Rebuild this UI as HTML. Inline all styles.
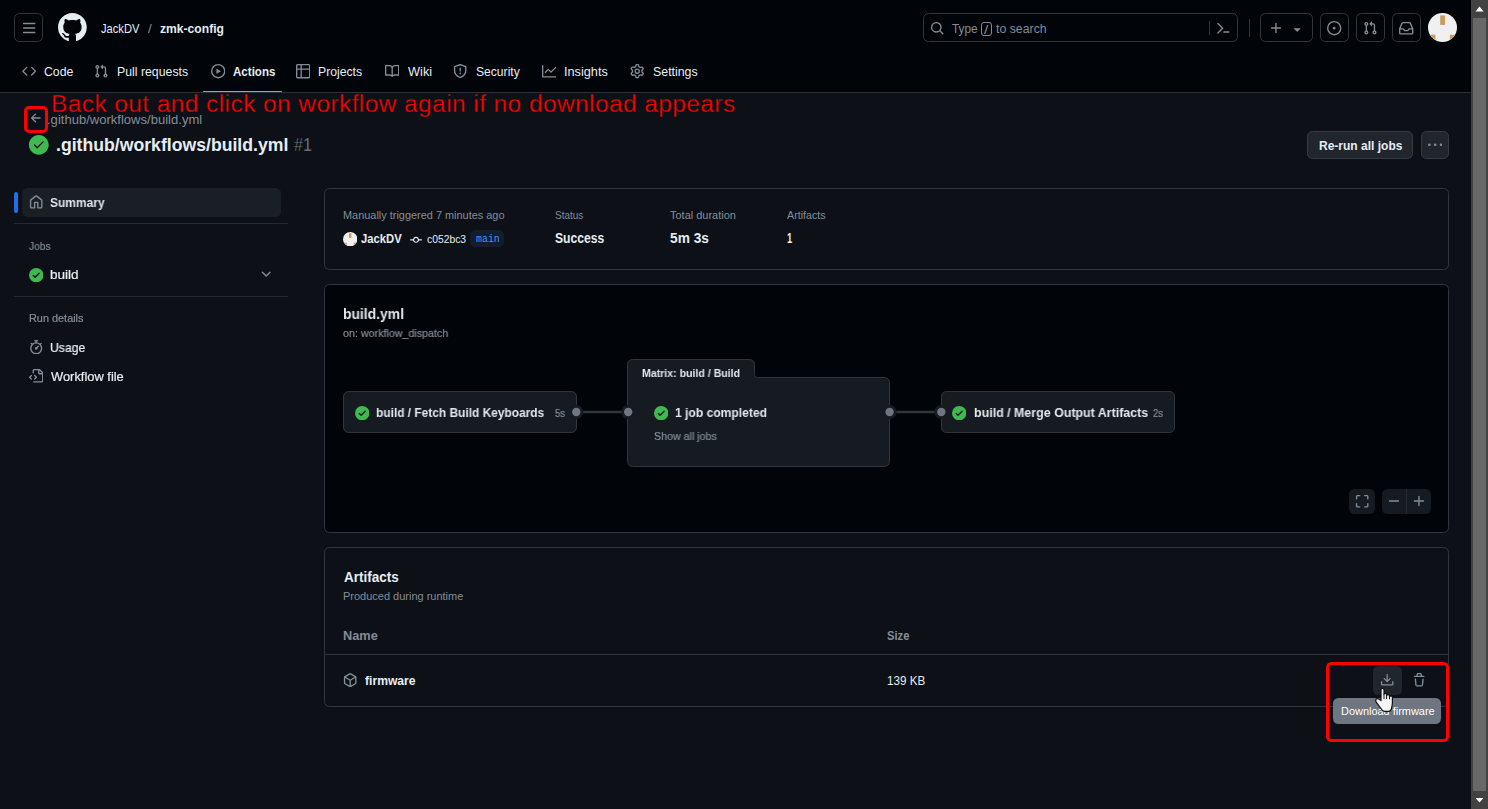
<!DOCTYPE html>
<html lang="en">
<head>
<meta charset="utf-8">
<title>.github/workflows/build.yml · JackDV/zmk-config</title>
<style>
html,body{margin:0;padding:0}
body{width:1488px;height:809px;overflow:hidden;position:relative;background:#0d1117;color:#e6edf3;font-family:"Liberation Sans",sans-serif;font-size:12.6px}
.i,.t,.b,.abs{position:absolute;display:block}
.t{white-space:nowrap;transform-origin:0 0;margin:0;padding:0;font-weight:400;text-decoration:none;color:#e6edf3}
.b{box-sizing:border-box}
a{color:inherit;text-decoration:none}
ul,li,h1,h2,h3,p{margin:0;padding:0;list-style:none;font-size:inherit;font-weight:inherit}
.hdr{left:0;top:0;width:1471px;height:93px;background:#010409;border-bottom:1px solid #2b3139}
.btn-o{border:1px solid #30363d;border-radius:5.4px}
.btn{background:#21262d;border:1px solid #363b42;border-radius:5.4px}
.card{border:1px solid #30363d;border-radius:5.4px}
.job{background:#161b22;border:1px solid #30363d;border-radius:5.4px}
.hr{height:1px;background:#252a32}
.sb-track{left:1471px;top:0;width:17px;height:809px;background:#424242}
.sb-thumb{left:1473px;top:18px;width:13px;height:773px;background:#686868}

</style>
</head>
<body>
<header class="abs hdr b"><button class="b btn-o" style="left:14px;top:13px;width:29px;height:29px;background:none;padding:0"></button><svg class="i" style="left:22.3px;top:21.3px;width:14.4px;height:14.4px" viewBox="0 0 16 16" fill="#848d97"><path d="M1 2.75A.75.75 0 0 1 1.75 2h12.5a.75.75 0 0 1 0 1.5H1.75A.75.75 0 0 1 1 2.75Zm0 5A.75.75 0 0 1 1.75 7h12.5a.75.75 0 0 1 0 1.5H1.75A.75.75 0 0 1 1 7.75ZM1.75 12h12.5a.75.75 0 0 1 0 1.5H1.75a.75.75 0 0 1 0-1.5Z"/></svg><svg class="i" style="left:58px;top:13px;width:28.8px;height:28.8px" viewBox="0 0 16 16" fill="#e6edf3"><path d="M8 0c4.42 0 8 3.58 8 8a8.013 8.013 0 0 1-5.45 7.59c-.4.08-.55-.17-.55-.38 0-.27.01-1.13.01-2.2 0-.75-.25-1.23-.54-1.48 1.78-.2 3.65-.88 3.65-3.95 0-.88-.31-1.59-.82-2.15.08-.2.36-1.02-.08-2.12 0 0-.67-.22-2.2.82-.64-.18-1.32-.27-2-.27-.68 0-1.36.09-2 .27-1.53-1.03-2.2-.82-2.2-.82-.44 1.1-.16 1.92-.08 2.12-.51.56-.82 1.28-.82 2.15 0 3.06 1.86 3.75 3.64 3.95-.23.2-.44.55-.51 1.07-.46.21-1.61.55-2.33-.66-.15-.24-.6-.83-1.23-.82-.67.01-.27.38.01.53.34.19.73.9.82 1.13.16.45.68 1.31 2.69.94 0 .67.01 1.3.01 1.49 0 .21-.15.45-.55.38A7.995 7.995 0 0 1 0 8c0-4.42 3.58-8 8-8Z"/></svg><nav aria-label="Breadcrumb"><a class="t" style="left:101.43px;top:20px;font-size:12.6px;line-height:19px;transform:scaleX(0.8849);">JackDV</a><span class="t" style="left:148.10px;top:20px;font-size:12.6px;line-height:19px;color:#848d97;transform:scaleX(1.0563);">/</span><a class="t" style="left:159.61px;top:20px;font-size:12.6px;line-height:19px;font-weight:700;transform:scaleX(0.9623);">zmk-config</a></nav><div role="search"><div class="b btn-o" style="left:923px;top:13px;width:315px;height:29px;"></div><svg class="i" style="left:930px;top:21.3px;width:14.4px;height:14.4px" viewBox="0 0 16 16" fill="#848d97"><path d="M10.68 11.74a6 6 0 0 1-7.922-8.982 6 6 0 0 1 8.982 7.922l3.04 3.04a.749.749 0 0 1-.326 1.275.749.749 0 0 1-.734-.215ZM11.5 7a4.499 4.499 0 1 0-8.997 0A4.499 4.499 0 0 0 11.5 7Z"/></svg><span class="t" style="left:952.34px;top:20px;font-size:12.6px;line-height:19px;color:#848d97;transform:scaleX(0.9326);">Type</span><kbd class="b" style="left:981px;top:22px;width:11px;height:14px;border:1px solid #848d97;border-radius:3px"></kbd><span class="t" style="left:984.20px;top:21px;font-size:12px;line-height:18px;color:#848d97;transform:scaleX(1.2890);">/</span><span class="t" style="left:996.17px;top:20px;font-size:12.6px;line-height:19px;color:#848d97;transform:scaleX(0.9778);">to search</span><div class="abs" style="left:1209px;top:21px;width:1px;height:14px;background:#30363d"></div><svg class="i" style="left:1215.8px;top:21.3px;width:14.4px;height:14.4px" viewBox="0 0 16 16" fill="#848d97"><path d="m6.354 8.04-4.773 4.773a.75.75 0 1 0 1.061 1.06L7.945 8.57a.75.75 0 0 0 0-1.06L2.642 2.206a.75.75 0 0 0-1.06 1.061L6.353 8.04ZM8.75 11.5a.75.75 0 0 0 0 1.5h5.5a.75.75 0 0 0 0-1.5h-5.5Z"/></svg></div><div class="abs" style="left:1249px;top:19px;width:1px;height:18px;background:#30363d"></div><button class="b btn-o" style="left:1260px;top:13px;width:53px;height:29px;background:none;padding:0"></button><svg class="i" style="left:1269px;top:21.3px;width:14.4px;height:14.4px" viewBox="0 0 16 16" fill="#848d97"><path d="M7.75 2a.75.75 0 0 1 .75.75V7h4.25a.75.75 0 0 1 0 1.5H8.5v4.25a.75.75 0 0 1-1.5 0V8.5H2.75a.75.75 0 0 1 0-1.5H7V2.75A.75.75 0 0 1 7.75 2Z"/></svg><svg class="i" style="left:1290.1px;top:21.6px;width:14.4px;height:14.4px" viewBox="0 0 16 16" fill="#848d97"><path d="m4.427 7.427 3.396 3.396a.25.25 0 0 0 .354 0l3.396-3.396A.25.25 0 0 0 11.396 7H4.604a.25.25 0 0 0-.177.427Z"/></svg><button class="b btn-o" style="left:1320px;top:13px;width:29px;height:29px;background:none;padding:0"></button><svg class="i" style="left:1327.3px;top:21.3px;width:14.4px;height:14.4px" viewBox="0 0 16 16" fill="#848d97"><path d="M8 9.5a1.5 1.5 0 1 0 0-3 1.5 1.5 0 0 0 0 3ZM8 0a8 8 0 1 1 0 16A8 8 0 0 1 8 0ZM1.5 8a6.5 6.5 0 1 0 13 0 6.5 6.5 0 0 0-13 0Z"/></svg><button class="b btn-o" style="left:1356px;top:13px;width:29px;height:29px;background:none;padding:0"></button><svg class="i" style="left:1363.3px;top:21.3px;width:14.4px;height:14.4px" viewBox="0 0 16 16" fill="#848d97"><path d="M1.5 3.25a2.25 2.25 0 1 1 3 2.122v5.256a2.251 2.251 0 1 1-1.5 0V5.372A2.25 2.25 0 0 1 1.5 3.25Zm5.677-.177L9.573.677A.25.25 0 0 1 10 .854V2.5h1A2.5 2.5 0 0 1 13.5 5v5.628a2.251 2.251 0 1 1-1.5 0V5a1 1 0 0 0-1-1h-1v1.646a.25.25 0 0 1-.427.177L7.177 3.427a.25.25 0 0 1 0-.354ZM3.75 2.5a.75.75 0 1 0 0 1.5.75.75 0 0 0 0-1.5Zm0 9.5a.75.75 0 1 0 0 1.5.75.75 0 0 0 0-1.5Zm8.25.75a.75.75 0 1 0 1.5 0 .75.75 0 0 0-1.5 0Z"/></svg><button class="b btn-o" style="left:1392px;top:13px;width:29px;height:29px;background:none;padding:0"></button><svg class="i" style="left:1399.3px;top:21.3px;width:14.4px;height:14.4px" viewBox="0 0 16 16" fill="#848d97"><path d="M2.8 2.06A1.75 1.75 0 0 1 4.41 1h7.18c.7 0 1.333.417 1.61 1.06l2.74 6.395c.04.093.06.194.06.295v4.5A1.75 1.75 0 0 1 14.25 15H1.75A1.75 1.75 0 0 1 0 13.25v-4.5c0-.101.02-.202.06-.295Zm1.61.44a.25.25 0 0 0-.23.152L1.887 8H4.75a.75.75 0 0 1 .6.3L6.625 10h2.75l1.275-1.7a.75.75 0 0 1 .6-.3h2.863L11.82 2.652a.25.25 0 0 0-.23-.152Zm10.09 7h-2.875l-1.275 1.7a.75.75 0 0 1-.6.3h-3.5a.75.75 0 0 1-.6-.3L4.375 9.5H1.5v3.75c0 .138.112.25.25.25h12.5a.25.25 0 0 0 .25-.25Z"/></svg><svg class="i" style="left:1428px;top:13px;width:29px;height:29px" viewBox="0 0 29 29"><defs><clipPath id="av"><circle cx="14.5" cy="14.5" r="14.5"/></clipPath></defs><g clip-path="url(#av)"><rect width="29" height="29" fill="#f0f0f0"/><rect x="12.2" y="2.400" width="4.8" height="9.500" fill="#c89b5e"/><rect x="2.8" y="21.7" width="4.6" height="8" fill="#c89b5e"/><rect x="21.9" y="21.7" width="4.6" height="8" fill="#c89b5e"/></g></svg><nav aria-label="Repository"><ul><li><svg class="i" style="left:21.8px;top:64.3px;width:14.4px;height:14.4px" viewBox="0 0 16 16" fill="#848d97"><path d="m11.28 3.22 4.25 4.25a.75.75 0 0 1 0 1.06l-4.25 4.25a.749.749 0 0 1-1.275-.326.749.749 0 0 1 .215-.734L13.94 8l-3.72-3.72a.749.749 0 0 1 .326-1.275.749.749 0 0 1 .734.215Zm-6.56 0a.751.751 0 0 1 1.042.018.751.751 0 0 1 .018 1.042L2.06 8l3.72 3.72a.749.749 0 0 1-.326 1.275.749.749 0 0 1-.734-.215L.47 8.53a.75.75 0 0 1 0-1.06Z"/></svg><a class="t" style="left:43.74px;top:63px;font-size:12.6px;line-height:19px;transform:scaleX(0.9748);">Code</a></li><li><svg class="i" style="left:93.65px;top:64.3px;width:14.4px;height:14.4px" viewBox="0 0 16 16" fill="#848d97"><path d="M1.5 3.25a2.25 2.25 0 1 1 3 2.122v5.256a2.251 2.251 0 1 1-1.5 0V5.372A2.25 2.25 0 0 1 1.5 3.25Zm5.677-.177L9.573.677A.25.25 0 0 1 10 .854V2.5h1A2.5 2.5 0 0 1 13.5 5v5.628a2.251 2.251 0 1 1-1.5 0V5a1 1 0 0 0-1-1h-1v1.646a.25.25 0 0 1-.427.177L7.177 3.427a.25.25 0 0 1 0-.354ZM3.75 2.5a.75.75 0 1 0 0 1.5.75.75 0 0 0 0-1.5Zm0 9.5a.75.75 0 1 0 0 1.5.75.75 0 0 0 0-1.5Zm8.25.75a.75.75 0 1 0 1.5 0 .75.75 0 0 0-1.5 0Z"/></svg><a class="t" style="left:117.09px;top:63px;font-size:12.6px;line-height:19px;transform:scaleX(0.9768);">Pull requests</a></li><li><svg class="i" style="left:210.8px;top:64.3px;width:14.4px;height:14.4px" viewBox="0 0 16 16" fill="#848d97"><path d="M8 0a8 8 0 1 1 0 16A8 8 0 0 1 8 0ZM1.5 8a6.5 6.5 0 1 0 13 0 6.5 6.5 0 0 0-13 0Zm4.879-2.773 4.264 2.559a.25.25 0 0 1 0 .428l-4.264 2.559A.25.25 0 0 1 6 10.559V5.442a.25.25 0 0 1 .379-.215Z"/></svg><a class="t" style="left:232.82px;top:63px;font-size:12.6px;line-height:19px;font-weight:700;transform:scaleX(0.9185);">Actions</a></li><li><svg class="i" style="left:295.8px;top:64.3px;width:14.4px;height:14.4px" viewBox="0 0 16 16" fill="#848d97"><path d="M0 1.75C0 .784.784 0 1.75 0h12.5C15.216 0 16 .784 16 1.75v12.5A1.75 1.75 0 0 1 14.25 16H1.75A1.75 1.75 0 0 1 0 14.25ZM6.5 6.5v8h7.75a.25.25 0 0 0 .25-.25V6.5Zm8-1.5V1.75a.25.25 0 0 0-.25-.25H6.5V5Zm-13 1.5v7.75c0 .138.112.25.25.25H5v-8ZM5 5V1.5H1.75a.25.25 0 0 0-.25.25V5Z"/></svg><a class="t" style="left:318.10px;top:63px;font-size:12.6px;line-height:19px;transform:scaleX(0.9699);">Projects</a></li><li><svg class="i" style="left:384.8px;top:64.3px;width:14.4px;height:14.4px" viewBox="0 0 16 16" fill="#848d97"><path d="M0 1.75A.75.75 0 0 1 .75 1h4.253c1.227 0 2.317.59 3 1.501A3.743 3.743 0 0 1 11.006 1h4.245a.75.75 0 0 1 .75.75v10.5a.75.75 0 0 1-.75.75h-4.507a2.25 2.25 0 0 0-1.591.659l-.622.621a.75.75 0 0 1-1.06 0l-.622-.621A2.25 2.25 0 0 0 5.258 13H.75a.75.75 0 0 1-.75-.75Zm7.251 10.324.004-5.073-.002-2.253A2.25 2.25 0 0 0 5.003 2.5H1.5v9h3.757a3.75 3.75 0 0 1 1.994.574ZM8.755 4.75l-.004 7.322a3.752 3.752 0 0 1 1.992-.572H14.5v-9h-3.495a2.25 2.25 0 0 0-2.25 2.25Z"/></svg><a class="t" style="left:407.55px;top:63px;font-size:12.6px;line-height:19px;transform:scaleX(1.0134);">Wiki</a></li><li><svg class="i" style="left:452.6px;top:64.3px;width:14.4px;height:14.4px" viewBox="0 0 16 16" fill="#848d97"><path d="M7.467.133a1.748 1.748 0 0 1 1.066 0l5.25 1.68A1.75 1.75 0 0 1 15 3.48V7c0 1.566-.32 3.182-1.303 4.682-.983 1.498-2.585 2.813-5.032 3.855a1.697 1.697 0 0 1-1.33 0c-2.447-1.042-4.049-2.357-5.032-3.855C1.32 10.182 1 8.566 1 7V3.48a1.75 1.75 0 0 1 1.217-1.667Zm.61 1.429a.25.25 0 0 0-.153 0l-5.25 1.68a.25.25 0 0 0-.174.238V7c0 1.358.275 2.666 1.057 3.86.784 1.194 2.121 2.34 4.366 3.297a.196.196 0 0 0 .154 0c2.245-.956 3.582-2.104 4.366-3.298C13.225 9.666 13.5 8.36 13.5 7V3.48a.251.251 0 0 0-.174-.237l-5.25-1.68ZM8.75 4.75v3a.75.75 0 0 1-1.5 0v-3a.75.75 0 0 1 1.5 0ZM9 10.5a1 1 0 1 1-2 0 1 1 0 0 1 2 0Z"/></svg><a class="t" style="left:476.05px;top:63px;font-size:12.6px;line-height:19px;transform:scaleX(0.9617);">Security</a></li><li><svg class="i" style="left:542px;top:64.3px;width:14.4px;height:14.4px" viewBox="0 0 16 16" fill="#848d97"><path d="M1.5 1.75V13.5h13.75a.75.75 0 0 1 0 1.5H.75a.75.75 0 0 1-.75-.75V1.75a.75.75 0 0 1 1.5 0Zm14.28 2.53-5.25 5.25a.75.75 0 0 1-1.06 0L7 7.06 4.28 9.78a.751.751 0 0 1-1.042-.018.751.751 0 0 1-.018-1.042l3.25-3.25a.75.75 0 0 1 1.06 0L10 7.94l4.72-4.72a.751.751 0 0 1 1.042.018.751.751 0 0 1 .018 1.042Z"/></svg><a class="t" style="left:563.93px;top:63px;font-size:12.6px;line-height:19px;transform:scaleX(1.0094);">Insights</a></li><li><svg class="i" style="left:630px;top:64.3px;width:14.4px;height:14.4px" viewBox="0 0 16 16" fill="#848d97"><path d="M8 0a8.2 8.2 0 0 1 .701.031C9.444.095 9.99.645 10.16 1.29l.288 1.107c.018.066.079.158.212.224.231.114.454.243.668.386.123.082.233.09.299.071l1.103-.303c.644-.176 1.392.021 1.82.63.27.385.506.792.704 1.218.315.675.111 1.422-.364 1.891l-.814.806c-.049.048-.098.147-.088.294.016.257.016.515 0 .772-.01.147.038.246.088.294l.814.806c.475.469.679 1.216.364 1.891a7.977 7.977 0 0 1-.704 1.217c-.428.61-1.176.807-1.82.63l-1.102-.302c-.067-.019-.177-.011-.3.071a5.909 5.909 0 0 1-.668.386c-.133.066-.194.158-.211.224l-.29 1.106c-.168.646-.715 1.196-1.458 1.26a8.006 8.006 0 0 1-1.402 0c-.743-.064-1.289-.614-1.458-1.26l-.289-1.106c-.018-.066-.079-.158-.212-.224a5.738 5.738 0 0 1-.668-.386c-.123-.082-.233-.09-.299-.071l-1.103.303c-.644.176-1.392-.021-1.82-.63a8.12 8.12 0 0 1-.704-1.218c-.315-.675-.111-1.422.363-1.891l.815-.806c.05-.048.098-.147.088-.294a6.214 6.214 0 0 1 0-.772c.01-.147-.038-.246-.088-.294l-.815-.806C.635 6.045.431 5.298.746 4.623a7.92 7.92 0 0 1 .704-1.217c.428-.61 1.176-.807 1.82-.63l1.102.302c.067.019.177.011.3-.071.214-.143.437-.272.668-.386.133-.066.194-.158.211-.224l.29-1.106C6.009.645 6.556.095 7.299.03 7.53.01 7.764 0 8 0Zm-.571 1.525c-.036.003-.108.036-.137.146l-.289 1.105c-.147.561-.549.967-.998 1.189-.173.086-.34.183-.5.29-.417.278-.97.423-1.529.27l-1.103-.303c-.109-.03-.175.016-.195.045-.22.312-.412.644-.573.99-.014.031-.021.11.059.19l.815.806c.411.406.562.957.53 1.456a4.709 4.709 0 0 0 0 .582c.032.499-.119 1.05-.53 1.456l-.815.806c-.081.08-.073.159-.059.19.162.346.353.677.573.989.02.03.085.076.195.046l1.102-.303c.56-.153 1.113-.008 1.53.27.161.107.328.204.501.29.447.222.85.629.997 1.189l.289 1.105c.029.109.101.143.137.146a6.6 6.6 0 0 0 1.142 0c.036-.003.108-.036.137-.146l.289-1.105c.147-.561.549-.967.998-1.189.173-.086.34-.183.5-.29.417-.278.97-.423 1.529-.27l1.103.303c.109.029.175-.016.195-.045.22-.313.411-.644.573-.99.014-.031.021-.11-.059-.19l-.815-.806c-.411-.406-.562-.957-.53-1.456a4.709 4.709 0 0 0 0-.582c-.032-.499.119-1.05.53-1.456l.815-.806c.081-.08.073-.159.059-.19a6.464 6.464 0 0 0-.573-.989c-.02-.03-.085-.076-.195-.046l-1.102.303c-.56.153-1.113.008-1.53-.27a4.44 4.44 0 0 0-.501-.29c-.447-.222-.85-.629-.997-1.189l-.289-1.105c-.029-.11-.101-.143-.137-.146a6.6 6.6 0 0 0-1.142 0ZM11 8a3 3 0 1 1-6 0 3 3 0 0 1 6 0ZM9.5 8a1.5 1.5 0 1 0-3.001.001A1.5 1.5 0 0 0 9.5 8Z"/></svg><a class="t" style="left:652.54px;top:63px;font-size:12.6px;line-height:19px;transform:scaleX(0.9820);">Settings</a></li><div class="abs" style="left:203px;top:90.8px;width:79px;height:1.4px;background:#f78166;border-radius:1px"></div></ul></nav></header>
<section class="pagehead"><svg class="i" style="left:28.5px;top:110.8px;width:14.4px;height:14.4px" viewBox="0 0 16 16" fill="#848d97"><path d="M7.78 12.53a.75.75 0 0 1-1.06 0L2.47 8.28a.75.75 0 0 1 0-1.06l4.25-4.25a.751.751 0 0 1 1.042.018.751.751 0 0 1 .018 1.042L4.81 7h7.44a.75.75 0 0 1 0 1.5H4.81l2.97 2.97a.75.75 0 0 1 0 1.06Z"/></svg><a class="t" style="left:47.41px;top:111px;font-size:12.6px;line-height:19px;color:#848d97;transform:scaleX(1.0360);">.github/workflows/build.yml</a><svg class="i" style="left:27.85px;top:134.1px;width:21.6px;height:21.6px" viewBox="0 0 24 24" fill="#3fb950"><path d="M1 12C1 5.925 5.925 1 12 1s11 4.925 11 11-4.925 11-11 11S1 18.075 1 12Zm16.28-2.72a.751.751 0 0 0-.018-1.042.751.751 0 0 0-1.042-.018l-5.97 5.97-2.47-2.47a.751.751 0 0 0-1.042.018.751.751 0 0 0-.018 1.042l3 3a.75.75 0 0 0 1.06 0Z"/></svg><h1><span class="t" style="left:55.67px;top:132px;font-size:18px;line-height:27px;font-weight:700;transform:scaleX(0.9804);">.github/workflows/build.yml</span><span class="t" style="left:294.29px;top:132px;font-size:18px;line-height:27px;color:#848d97;transform:scaleX(0.9015);-webkit-text-stroke:0.350px #0d1117;">#1</span></h1><button class="b btn" style="left:1307px;top:131px;width:106px;height:28px;padding:0"></button><span class="t" style="left:1318.81px;top:137px;font-size:12.6px;line-height:19px;font-weight:700;transform:scaleX(0.9539);">Re-run all jobs</span><button class="b btn" style="left:1421px;top:131px;width:28px;height:28px;padding:0"></button><svg class="i" style="left:1427.8px;top:137.8px;width:14.4px;height:14.4px" viewBox="0 0 16 16" fill="#848d97"><path d="M8 9a1.5 1.5 0 1 0 0-3 1.5 1.5 0 0 0 0 3ZM1.5 9a1.5 1.5 0 1 0 0-3 1.5 1.5 0 0 0 0 3Zm13 0a1.5 1.5 0 1 0 0-3 1.5 1.5 0 0 0 0 3Z"/></svg></section>
<aside class="sidebar"><div class="abs" style="left:14px;top:192px;width:4px;height:21px;background:#1f6feb;border-radius:2px"></div><div class="abs" style="left:22px;top:188px;width:259px;height:29px;background:#1a1e25;border-radius:5.4px"></div><svg class="i" style="left:28.6px;top:195.3px;width:14.4px;height:14.4px" viewBox="0 0 16 16" fill="#848d97"><path d="M6.906.664a1.749 1.749 0 0 1 2.187 0l5.25 4.2c.415.332.657.835.657 1.367v7.019A1.75 1.75 0 0 1 13.25 15h-3.5a.75.75 0 0 1-.75-.75V9H7v5.25a.75.75 0 0 1-.75.75h-3.5A1.75 1.75 0 0 1 1 13.25V6.23c0-.531.242-1.034.657-1.366l5.25-4.2Zm1.25 1.171a.25.25 0 0 0-.312 0l-5.25 4.2a.25.25 0 0 0-.094.196v7.019c0 .138.112.25.25.25H5.5V8.25a.75.75 0 0 1 .75-.75h3.5a.75.75 0 0 1 .75.75v5.25h2.75a.25.25 0 0 0 .25-.25V6.23a.25.25 0 0 0-.094-.195Z"/></svg><a class="t" style="left:50.26px;top:194px;font-size:12.6px;line-height:19px;font-weight:700;color:#e2e8ee;transform:scaleX(0.9508);will-change:transform;">Summary</a><div class="abs hr" style="left:14px;top:223px;width:274px;height:1px;"></div><h3 class="t" style="left:29.45px;top:238px;font-size:10.8px;line-height:17px;color:#848d97;transform:scaleX(0.9412);will-change:transform;-webkit-text-stroke:0.2px #848d97;">Jobs</h3><svg class="i" style="left:29px;top:268px;width:14.4px;height:14.4px" viewBox="0 0 16 16" fill="#3fb950"><path d="M8 16A8 8 0 1 1 8 0a8 8 0 0 1 0 16Zm3.78-9.72a.751.751 0 0 0-.018-1.042.751.751 0 0 0-1.042-.018L6.75 9.19 5.28 7.72a.751.751 0 0 0-1.042.018.751.751 0 0 0-.018 1.042l2 2a.75.75 0 0 0 1.06 0Z"/></svg><a class="t" style="left:50.23px;top:266px;font-size:12.6px;line-height:19px;transform:scaleX(1.0775);will-change:transform;-webkit-text-stroke:0.2px #e6edf3;">build</a><svg class="i" style="left:259.2px;top:266.6px;width:14.4px;height:14.4px" viewBox="0 0 16 16" fill="#848d97"><path d="M12.78 5.22a.749.749 0 0 1 0 1.06l-4.25 4.25a.749.749 0 0 1-1.06 0L3.22 6.28a.749.749 0 1 1 1.06-1.06L8 8.939l3.72-3.719a.749.749 0 0 1 1.06 0Z"/></svg><div class="abs hr" style="left:14px;top:296px;width:274px;height:1px;"></div><h3 class="t" style="left:28.71px;top:310px;font-size:10.8px;line-height:17px;color:#848d97;transform:scaleX(1.0084);will-change:transform;-webkit-text-stroke:0.2px #848d97;">Run details</h3><svg class="i" style="left:29.2px;top:340px;width:14.4px;height:14.4px" viewBox="0 0 16 16" fill="#848d97"><path d="M5.75.75A.75.75 0 0 1 6.5 0h3a.75.75 0 0 1 0 1.5h-.75v1l-.001.041a6.724 6.724 0 0 1 3.464 1.435l.007-.006.75-.75a.749.749 0 0 1 1.275.326.749.749 0 0 1-.215.734l-.75.75-.006.007a6.75 6.75 0 1 1-10.548 0L2.72 5.03l-.75-.75a.751.751 0 0 1 .018-1.042.751.751 0 0 1 1.042-.018l.75.75.007.006A6.72 6.72 0 0 1 7.25 2.541V1.5H6.5a.75.75 0 0 1-.75-.75ZM8 14.5a5.25 5.25 0 1 0-.001-10.501A5.25 5.25 0 0 0 8 14.5Zm.389-6.7 1.33-1.33a.75.75 0 1 1 1.061 1.06L9.45 8.861A1.503 1.503 0 0 1 8 10.75a1.499 1.499 0 1 1 .389-2.95Z"/></svg><a class="t" style="left:50.16px;top:339px;font-size:12.6px;line-height:19px;transform:scaleX(0.9659);will-change:transform;-webkit-text-stroke:0.2px #e6edf3;">Usage</a><svg class="i" style="left:29px;top:369px;width:14.4px;height:14.4px" viewBox="0 0 16 16" fill="#848d97"><path d="M4 1.75C4 .784 4.784 0 5.75 0h5.586c.464 0 .909.184 1.237.513l2.914 2.914c.329.328.513.773.513 1.237v8.586A1.75 1.75 0 0 1 14.25 15h-9a.75.75 0 0 1 0-1.5h9a.25.25 0 0 0 .25-.25V6h-2.75A1.75 1.75 0 0 1 10 4.25V1.5H5.75a.25.25 0 0 0-.25.25v2.5a.75.75 0 0 1-1.5 0Zm1.72 4.97a.75.75 0 0 1 1.06 0l2 2a.75.75 0 0 1 0 1.06l-2 2a.749.749 0 0 1-1.275-.326.749.749 0 0 1 .215-.734l1.47-1.47-1.47-1.47a.75.75 0 0 1 0-1.06ZM3.28 7.78 1.81 9.25l1.47 1.47a.751.751 0 0 1-.018 1.042.751.751 0 0 1-1.042.018l-2-2a.75.75 0 0 1 0-1.06l2-2a.751.751 0 0 1 1.042.018.751.751 0 0 1 .018 1.042Zm8.22-6.218V4.25c0 .138.112.25.25.25h2.688l-.011-.013-2.914-2.914-.013-.011Z"/></svg><a class="t" style="left:51.05px;top:368px;font-size:12.6px;line-height:19px;transform:scaleX(1.0231);will-change:transform;-webkit-text-stroke:0.2px #e6edf3;">Workflow file</a></aside>
<main><div class="b card" style="left:324px;top:188px;width:1125px;height:82px;"></div><section class="summary"><span class="t" style="left:342.95px;top:207px;font-size:10.8px;line-height:17px;color:#848d97;transform:scaleX(1.0116);">Manually triggered 7 minutes ago</span><svg class="i" style="left:343px;top:232px;width:14.4px;height:14.4px" viewBox="0 0 29 29"><defs><clipPath id="av2"><circle cx="14.5" cy="14.5" r="14.5"/></clipPath></defs><g clip-path="url(#av2)"><rect width="29" height="29" fill="#f0f0f0"/><rect x="12.2" y="2.400" width="4.8" height="9.500" fill="#c89b5e"/><rect x="2.8" y="21.7" width="4.6" height="8" fill="#c89b5e"/><rect x="21.9" y="21.7" width="4.6" height="8" fill="#c89b5e"/></g></svg><a class="t" style="left:361.18px;top:230px;font-size:12.6px;line-height:19px;font-weight:700;transform:scaleX(0.8935);">JackDV</a><svg class="i" style="left:410px;top:234.2px;width:12px;height:12px" viewBox="0 0 16 16" fill="#e6edf3"><path d="M11.93 8.5a4.002 4.002 0 0 1-7.86 0H.75a.75.75 0 0 1 0-1.5h3.32a4.002 4.002 0 0 1 7.86 0h3.32a.75.75 0 0 1 0 1.5Zm-1.43-.75a2.5 2.5 0 1 0-5 0 2.5 2.5 0 0 0 5 0Z"/></svg><a class="t" style="left:426.92px;top:231px;font-size:10.8px;line-height:17px;transform:scaleX(0.9570);">c052bc3</a><div class="abs" style="left:470px;top:230px;width:34px;height:17px;background:#121d2f;border-radius:5.4px"></div><a class="t" style="left:475.62px;top:231px;font-size:10.8px;line-height:17px;color:#4493f8;font-family:'Liberation Mono',monospace;transform:scaleX(0.9177);">main</a><span class="t" style="left:555.15px;top:207px;font-size:10.8px;line-height:17px;color:#848d97;transform:scaleX(0.9229);">Status</span><span class="t" style="left:555.26px;top:227px;font-size:14.4px;line-height:22px;font-weight:700;transform:scaleX(0.8433);">Success</span><span class="t" style="left:670.36px;top:207px;font-size:10.8px;line-height:17px;color:#848d97;transform:scaleX(1.0162);">Total duration</span><span class="t" style="left:670.19px;top:227px;font-size:14.4px;line-height:22px;font-weight:700;transform:scaleX(0.9531);">5m 3s</span><span class="t" style="left:787.08px;top:207px;font-size:10.8px;line-height:17px;color:#848d97;transform:scaleX(0.9897);">Artifacts</span><span class="t" style="left:786.82px;top:227px;font-size:14.4px;line-height:22px;font-weight:700;transform:scaleX(0.6543);">1</span></section><div class="b card" style="left:324px;top:284px;width:1125px;height:249px;background:#010409"></div><section class="graph"><h2 class="t" style="left:342.95px;top:303px;font-size:14.4px;line-height:22px;font-weight:700;color:#e2e8ee;transform:scaleX(0.9664);will-change:transform;">build.yml</h2><span class="t" style="left:343.40px;top:325px;font-size:10.8px;line-height:17px;color:#848d97;transform:scaleX(0.9914);will-change:transform;-webkit-text-stroke:0.2px #848d97;">on: workflow_dispatch</span><svg class="i" style="left:324px;top:284px;width:1125px;height:249px" viewBox="324 284 1125 249"><path d="M577 412H627M890 412H941" stroke="#30363d" stroke-width="2.300" fill="none"/><path d="M632.5 359.5H749.5a5 5 0 0 1 5 5V374.500a3 3 0 0 0 3 3H884.5a5 5 0 0 1 5 5V461.500a5 5 0 0 1-5 5H632.5a5 5 0 0 1-5-5V364.5a5 5 0 0 1 5-5Z" fill="#161b22" stroke="#30363d" stroke-width="1"/></svg><div class="b job" style="left:343px;top:391px;width:234px;height:42px;"></div><svg class="i" style="left:355px;top:406px;width:14.4px;height:14.4px" viewBox="0 0 16 16" fill="#3fb950"><path d="M8 16A8 8 0 1 1 8 0a8 8 0 0 1 0 16Zm3.78-9.72a.751.751 0 0 0-.018-1.042.751.751 0 0 0-1.042-.018L6.75 9.19 5.28 7.72a.751.751 0 0 0-1.042.018.751.751 0 0 0-.018 1.042l2 2a.75.75 0 0 0 1.06 0Z"/></svg><a class="t" style="left:376.33px;top:404px;font-size:12.6px;line-height:19px;font-weight:700;color:#e2e8ee;transform:scaleX(0.9460);will-change:transform;">build / Fetch Build Keyboards</a><span class="t" style="left:555.22px;top:405px;font-size:10.8px;line-height:17px;color:#848d97;transform:scaleX(0.8692);will-change:transform;-webkit-text-stroke:0.2px #848d97;">5s</span><span class="t" style="left:641.65px;top:365px;font-size:10.8px;line-height:17px;font-weight:700;color:#e2e8ee;transform:scaleX(0.9790);will-change:transform;">Matrix: build / Build</span><svg class="i" style="left:654px;top:406px;width:14.4px;height:14.4px" viewBox="0 0 16 16" fill="#3fb950"><path d="M8 16A8 8 0 1 1 8 0a8 8 0 0 1 0 16Zm3.78-9.72a.751.751 0 0 0-.018-1.042.751.751 0 0 0-1.042-.018L6.75 9.19 5.28 7.72a.751.751 0 0 0-1.042.018.751.751 0 0 0-.018 1.042l2 2a.75.75 0 0 0 1.06 0Z"/></svg><span class="t" style="left:674.85px;top:404px;font-size:12.6px;line-height:19px;font-weight:700;color:#e2e8ee;transform:scaleX(0.9592);will-change:transform;">1 job completed</span><a class="t" style="left:653.62px;top:428px;font-size:10.8px;line-height:17px;color:#848d97;transform:scaleX(0.9871);will-change:transform;-webkit-text-stroke:0.2px #848d97;">Show all jobs</a><div class="b job" style="left:941px;top:391px;width:234px;height:42px;"></div><svg class="i" style="left:952px;top:406px;width:14.4px;height:14.4px" viewBox="0 0 16 16" fill="#3fb950"><path d="M8 16A8 8 0 1 1 8 0a8 8 0 0 1 0 16Zm3.78-9.72a.751.751 0 0 0-.018-1.042.751.751 0 0 0-1.042-.018L6.75 9.19 5.28 7.72a.751.751 0 0 0-1.042.018.751.751 0 0 0-.018 1.042l2 2a.75.75 0 0 0 1.06 0Z"/></svg><a class="t" style="left:974.04px;top:404px;font-size:12.6px;line-height:19px;font-weight:700;color:#e2e8ee;transform:scaleX(0.9866);will-change:transform;">build / Merge Output Artifacts</a><span class="t" style="left:1153.13px;top:405px;font-size:10.8px;line-height:17px;color:#848d97;transform:scaleX(0.8782);will-change:transform;-webkit-text-stroke:0.2px #848d97;">2s</span><svg class="i" style="left:560px;top:400px;width:400px;height:24px" viewBox="560 400 400 24"><circle cx="576.3" cy="412" r="5.600" fill="#6e7681" stroke="#161b22" stroke-width="2.800"/><circle cx="628.2" cy="412" r="5.600" fill="#6e7681" stroke="#161b22" stroke-width="2.800"/><circle cx="889.6" cy="412" r="5.600" fill="#6e7681" stroke="#161b22" stroke-width="2.800"/><circle cx="941.3" cy="412" r="5.600" fill="#6e7681" stroke="#161b22" stroke-width="2.800"/></svg><div class="abs" style="left:1349px;top:489px;width:26px;height:25px;background:#161b22;border-radius:5.4px"></div><svg class="i" style="left:1355.2px;top:494.3px;width:14.4px;height:14.4px" viewBox="0 0 16 16" fill="#848d97"><path d="M1.75 10a.75.75 0 0 1 .75.75v2.5c0 .138.112.25.25.25h2.5a.75.75 0 0 1 0 1.5h-2.5A1.75 1.75 0 0 1 1 13.25v-2.5a.75.75 0 0 1 .75-.75Zm12.5 0a.75.75 0 0 1 .75.75v2.5A1.75 1.75 0 0 1 13.25 15h-2.5a.75.75 0 0 1 0-1.5h2.5a.25.25 0 0 0 .25-.25v-2.5a.75.75 0 0 1 .75-.75ZM2.75 2.5a.25.25 0 0 0-.25.25v2.5a.75.75 0 0 1-1.5 0v-2.5C1 1.784 1.784 1 2.75 1h2.5a.75.75 0 0 1 0 1.5ZM10 1.75a.75.75 0 0 1 .75-.75h2.5c.966 0 1.75.784 1.75 1.75v2.5a.75.75 0 0 1-1.5 0v-2.5a.25.25 0 0 0-.25-.25h-2.5a.75.75 0 0 1-.75-.75Z"/></svg><div class="abs" style="left:1382px;top:489px;width:49px;height:25px;background:#161b22;border-radius:5.4px"></div><div class="abs" style="left:1406px;top:489px;width:1px;height:25px;background:#262c36"></div><svg class="i" style="left:1387px;top:494px;width:14.4px;height:14.4px" viewBox="0 0 16 16" fill="#848d97"><path d="M2 7.75A.75.75 0 0 1 2.75 7h10a.75.75 0 0 1 0 1.5h-10A.75.75 0 0 1 2 7.750Z"/></svg><svg class="i" style="left:1411.8px;top:494px;width:14.4px;height:14.4px" viewBox="0 0 16 16" fill="#848d97"><path d="M7.75 2a.75.75 0 0 1 .75.75V7h4.25a.75.75 0 0 1 0 1.5H8.5v4.25a.75.75 0 0 1-1.5 0V8.5H2.75a.75.75 0 0 1 0-1.5H7V2.75A.75.75 0 0 1 7.75 2Z"/></svg></section><div class="b card" style="left:324px;top:547px;width:1125px;height:160px;"></div><section class="artifacts"><h2 class="t" style="left:343.53px;top:566px;font-size:14.4px;line-height:22px;font-weight:700;transform:scaleX(0.9383);">Artifacts</h2><span class="t" style="left:342.95px;top:588px;font-size:10.8px;line-height:17px;color:#848d97;transform:scaleX(1.0174);">Produced during runtime</span><span class="t" style="left:343.01px;top:627px;font-size:12.6px;line-height:19px;font-weight:700;color:#848d97;transform:scaleX(1.0121);">Name</span><span class="t" style="left:887.29px;top:627px;font-size:12.6px;line-height:19px;font-weight:700;color:#848d97;transform:scaleX(0.8882);">Size</span><div class="abs" style="left:325px;top:654px;width:1123px;height:1px;background:#30363d"></div><svg class="i" style="left:342.85px;top:673px;width:14.4px;height:14.4px" viewBox="0 0 16 16" fill="#848d97"><path d="m8.878.392 5.25 3.045c.54.314.872.89.872 1.514v6.098a1.75 1.75 0 0 1-.872 1.514l-5.25 3.045a1.75 1.75 0 0 1-1.756 0l-5.25-3.045A1.75 1.75 0 0 1 1 11.049V4.951c0-.624.332-1.201.872-1.514L7.122.392a1.75 1.75 0 0 1 1.756 0ZM7.875 1.69l-4.63 2.685L8 7.133l4.755-2.758-4.63-2.685a.248.248 0 0 0-.25 0ZM2.5 5.677v5.372c0 .09.047.171.125.216l4.625 2.683V8.432Zm6.25 8.271 4.625-2.683a.25.25 0 0 0 .125-.216V5.677L8.75 8.432Z"/></svg><a class="t" style="left:365.39px;top:672px;font-size:12.6px;line-height:19px;font-weight:700;transform:scaleX(0.9629);">firmware</a><span class="t" style="left:887.22px;top:672px;font-size:12.6px;line-height:19px;transform:scaleX(0.9241);">139 KB</span><div class="abs" style="left:1373px;top:666px;width:29px;height:29px;background:#21262d;border-radius:5.4px"></div><svg class="i" style="left:1380.3px;top:673.3px;width:14.4px;height:14.4px" viewBox="0 0 16 16" fill="#848d97"><path d="M2.75 14A1.75 1.75 0 0 1 1 12.25v-2.5a.75.75 0 0 1 1.5 0v2.5c0 .138.112.25.25.25h10.5a.25.25 0 0 0 .25-.25v-2.5a.75.75 0 0 1 1.5 0v2.5A1.75 1.75 0 0 1 13.25 14ZM7.25 7.689V2a.75.75 0 0 1 1.5 0v5.689l1.97-1.969a.749.749 0 1 1 1.06 1.06l-3.25 3.25a.749.749 0 0 1-1.06 0L4.22 6.78a.749.749 0 1 1 1.06-1.06l1.97 1.969Z"/></svg><svg class="i" style="left:1412.3px;top:673.3px;width:14.4px;height:14.4px" viewBox="0 0 16 16" fill="#848d97"><path d="M11 1.75V3h2.25a.75.75 0 0 1 0 1.5H2.75a.75.75 0 0 1 0-1.5H5V1.75C5 .784 5.784 0 6.75 0h2.5C10.216 0 11 .784 11 1.75ZM4.496 6.675l.66 6.6a.25.25 0 0 0 .249.225h5.19a.25.25 0 0 0 .249-.225l.66-6.6a.75.75 0 0 1 1.492.149l-.66 6.6A1.748 1.748 0 0 1 10.595 15h-5.19a1.75 1.75 0 0 1-1.741-1.575l-.66-6.6a.75.75 0 1 1 1.492-.15ZM6.5 1.75V3h3V1.75a.25.25 0 0 0-.25-.25h-2.5a.25.25 0 0 0-.25.25Z"/></svg></section></main>
<div class="overlays"><div class="abs" style="left:1333px;top:698px;width:108px;height:26px;background:#6e7681;border-radius:5.4px"></div><span class="t" style="left:1340.60px;top:703px;font-size:10.8px;line-height:17px;color:#ffffff;transform:scaleX(1.0134);">Download firmware</span><div class="b" style="left:24px;top:106px;width:24px;height:27px;border:3px solid #ff0000;border-radius:5px"></div><span class="t" style="left:50.60px;top:85px;font-size:24.4px;line-height:37px;color:#ff0000;transform:scaleX(1.0006);letter-spacing:0.45px;-webkit-text-stroke:0.350px #0d1117;">Back out and click on workflow again if no download appears</span><div class="b" style="left:1326px;top:662px;width:123px;height:80px;border:3px solid #ff0000;border-radius:5.500px"></div><svg class="i" style="left:1373px;top:686px;width:22px;height:27px" viewBox="0 0 22 27"><path d="M9.5 2.300C8.600 2.300 8 3 8 3.800V14.600L5.600 12.900C4.600 12.200 3.200 12.600 2.800 13.800C2.500 14.800 2.900 15.800 3.600 16.600L8.300 23C9 24.500 10 25.300 11.500 25.300H15.500C17 25.300 18 24.300 18.400 22.800C19 20.500 19.400 18.500 19.400 16.500V11.600C19.400 10.600 18.800 10 17.900 10C17.200 10 16.700 10.400 16.500 10.900V10.200C16.500 9.200 15.900 8.600 15 8.600C14.300 8.600 13.800 9 13.600 9.500V9C13.600 8 13 7.400 12.200 7.400C11.600 7.400 11.200 7.700 11 8.100V3.800C11 3 10.400 2.300 9.500 2.300Z" fill="#f4f4f4" stroke="#111" stroke-width="1.200" stroke-linejoin="round"/><path d="M11 8V13M13.600 9.400V13M16.500 10.800V13.300" stroke="#111" stroke-width="1" fill="none"/></svg><div class="abs sb-track"></div><div class="abs sb-thumb"></div><svg class="i" style="left:1471px;top:0;width:17px;height:17px" viewBox="0 0 17 17"><path d="M4.500 11.500 8.500 6.500 12.500 11.500Z" fill="#fff"/></svg><svg class="i" style="left:1471px;top:792px;width:17px;height:17px" viewBox="0 0 17 17"><path d="M4.600 6 8.500 10.600 12.400 6Z" fill="#fff"/></svg></div>
</body>
</html>
